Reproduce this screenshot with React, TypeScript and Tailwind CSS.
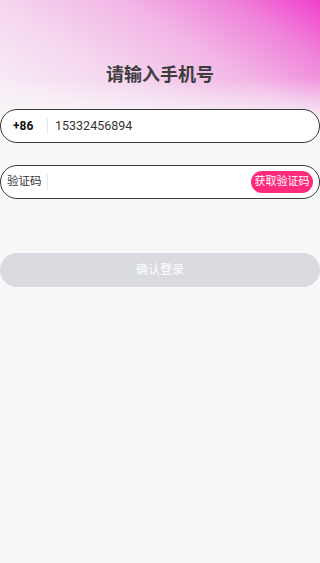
export default function App() {
  return (
    <div className="relative min-h-screen w-full overflow-hidden bg-[#f8f8f8] font-['Roboto','Noto_Sans_CJK_SC',sans-serif]">
      <div className="absolute inset-x-0 top-0 h-[128px] bg-[linear-gradient(180deg,rgba(248,248,248,0)_62%,#f8f8f8_100%),linear-gradient(212deg,#f040cc_0%,#f084da_18%,#f2b6e6_38%,#f5d6ef_62%,#f8ecf6_88%)]" />
      <div className="relative flex flex-col">
        <h1 className="pt-[62px] text-center text-[18px] font-bold leading-[26px] text-[#3d3d3d]">
          请输入手机号
        </h1>

        <div className="mt-[21px] flex h-[34px] items-center rounded-full border border-[#3a3a3a] bg-white">
          <span className="w-[46px] pl-[12px] text-[12px] font-bold text-[#111]">+86</span>
          <span className="h-[16px] w-px bg-[#e6e6e6]" />
          <span className="pl-[7px] text-[12.5px] text-[#333]">15332456894</span>
        </div>

        <div className="mt-[22px] flex h-[34px] items-center rounded-full border border-[#3a3a3a] bg-white pr-[6px]">
          <span className="w-[46px] pl-[6px] text-[11.5px] text-[#333]">验证码</span>
          <span className="h-[16px] w-px bg-[#e6e6e6]" />
          <span className="flex-1" />
          <button
            type="button"
            className="flex h-[22px] w-[62px] items-center justify-center rounded-full bg-[#ff2a7a] text-[11px] text-white"
          >
            获取验证码
          </button>
        </div>

        <button
          type="button"
          className="mt-[54px] flex h-[34px] items-center justify-center rounded-full bg-[#d9dbe1] text-[12px] text-white"
        >
          确认登录
        </button>
      </div>
    </div>
  );
}
